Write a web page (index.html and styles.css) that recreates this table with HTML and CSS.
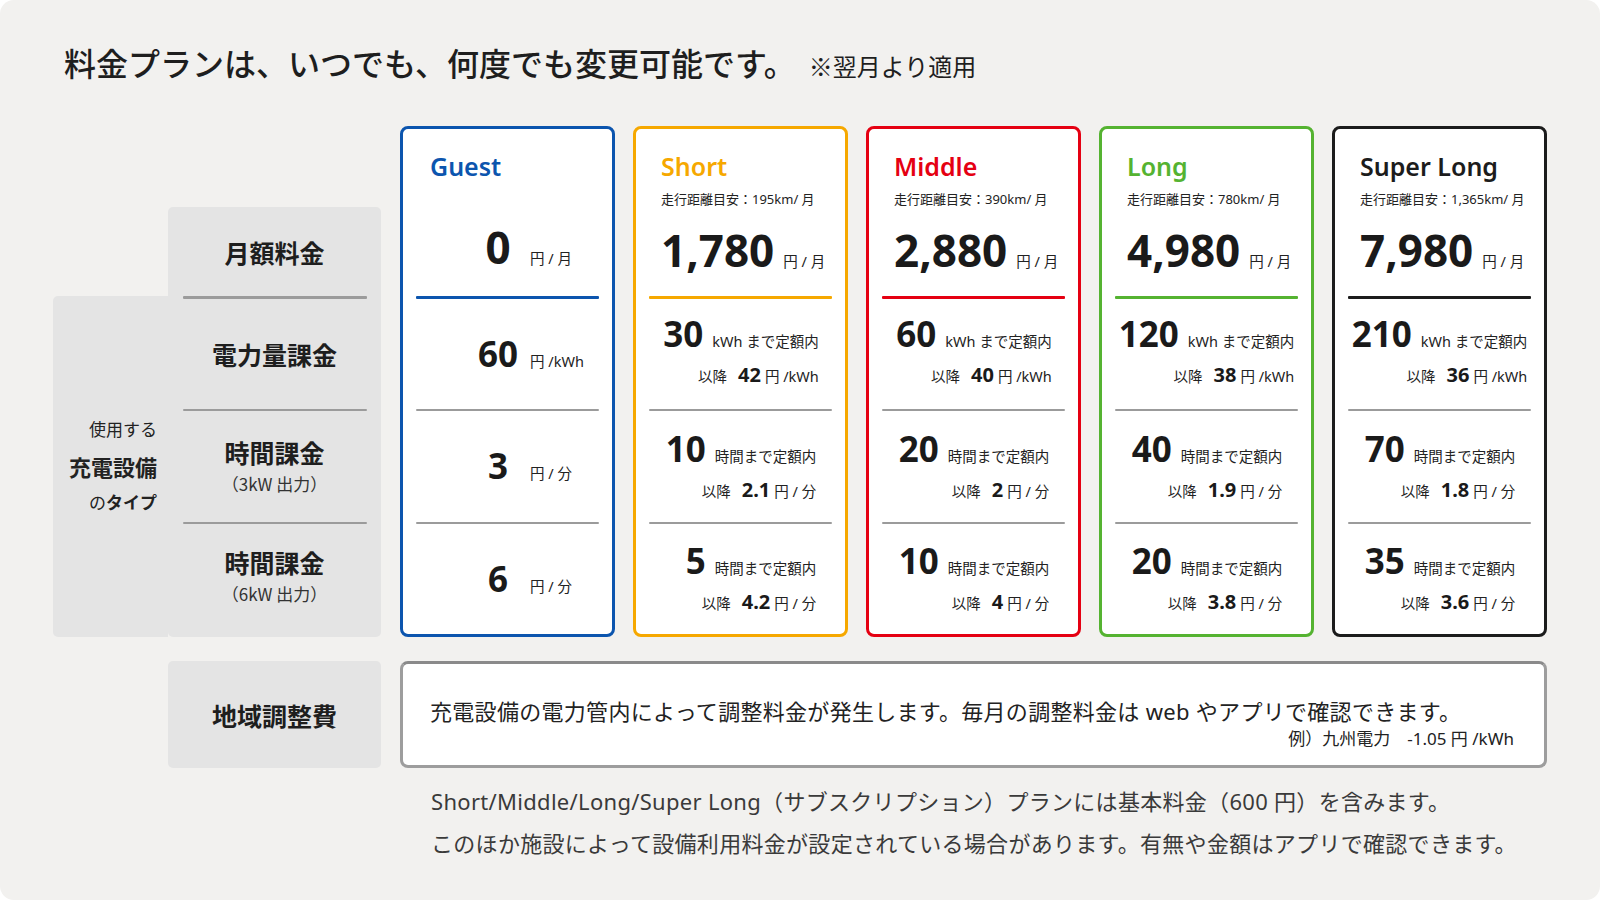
FILE: index.html
```html
<!DOCTYPE html>
<html lang="ja">
<head>
<meta charset="utf-8">
<title>料金プラン</title>
<link rel="stylesheet" href="styles.css">
</head>
<body>
<div class="page">
  <h1 class="headline">料金プランは、いつでも、何度でも変更可能です。<span class="headline-note">※翌月より適用</span></h1>

  <div class="table">
    <div class="labels">
      <div class="type-box">
        <p class="type-l1">使用する</p>
        <p class="type-l2">充電設備</p>
        <p class="type-l3">の<b>タイプ</b></p>
      </div>
      <div class="label-col">
        <div class="label-row label-row--month">月額料金</div>
        <div class="rule rule--label rule--thick"></div>
        <div class="label-row">電力量課金</div>
        <div class="rule rule--label"></div>
        <div class="label-row label-row--kw3"><span>時間課金</span><small>（3kW 出力）</small></div>
        <div class="rule rule--label"></div>
        <div class="label-row"><span>時間課金</span><small>（6kW 出力）</small></div>
      </div>
    </div>

    <div class="cards">
      <!-- Guest -->
      <div class="card card--guest">
        <div class="card-head">
          <div class="plan-name">Guest</div>
          <div class="guest-line guest-line--head"><span class="guest-num guest-num--big">0</span><span class="unit">円 / 月</span></div>
        </div>
        <div class="rule rule--accent"></div>
        <div class="card-row"><div class="guest-line"><span class="guest-num">60</span><span class="unit">円 /kWh</span></div></div>
        <div class="rule"></div>
        <div class="card-row"><div class="guest-line"><span class="guest-num">3</span><span class="unit">円 / 分</span></div></div>
        <div class="rule"></div>
        <div class="card-row"><div class="guest-line"><span class="guest-num">6</span><span class="unit">円 / 分</span></div></div>
      </div>

      <!-- Short -->
      <div class="card card--short">
        <div class="card-head">
          <div class="plan-name">Short</div>
          <div class="plan-range">走行距離目安：195km/ 月</div>
          <div class="plan-price"><span class="price-num">1,780</span><span class="unit">円 / 月</span></div>
        </div>
        <div class="rule rule--accent"></div>
        <div class="card-row card-row--energy"><div class="quota">
          <div class="quota-main"><span class="quota-num">30</span><span class="quota-text">kWh まで定額内</span></div>
          <div class="quota-sub"><span class="sub-label">以降</span><span class="sub-num">42</span><span class="unit">円 /kWh</span></div>
        </div></div>
        <div class="rule"></div>
        <div class="card-row"><div class="quota">
          <div class="quota-main"><span class="quota-num">10</span><span class="quota-text">時間まで定額内</span></div>
          <div class="quota-sub"><span class="sub-label">以降</span><span class="sub-num">2.1</span><span class="unit">円 / 分</span></div>
        </div></div>
        <div class="rule"></div>
        <div class="card-row"><div class="quota">
          <div class="quota-main"><span class="quota-num">5</span><span class="quota-text">時間まで定額内</span></div>
          <div class="quota-sub"><span class="sub-label">以降</span><span class="sub-num">4.2</span><span class="unit">円 / 分</span></div>
        </div></div>
      </div>

      <!-- Middle -->
      <div class="card card--middle">
        <div class="card-head">
          <div class="plan-name">Middle</div>
          <div class="plan-range">走行距離目安：390km/ 月</div>
          <div class="plan-price"><span class="price-num">2,880</span><span class="unit">円 / 月</span></div>
        </div>
        <div class="rule rule--accent"></div>
        <div class="card-row card-row--energy"><div class="quota">
          <div class="quota-main"><span class="quota-num">60</span><span class="quota-text">kWh まで定額内</span></div>
          <div class="quota-sub"><span class="sub-label">以降</span><span class="sub-num">40</span><span class="unit">円 /kWh</span></div>
        </div></div>
        <div class="rule"></div>
        <div class="card-row"><div class="quota">
          <div class="quota-main"><span class="quota-num">20</span><span class="quota-text">時間まで定額内</span></div>
          <div class="quota-sub"><span class="sub-label">以降</span><span class="sub-num">2</span><span class="unit">円 / 分</span></div>
        </div></div>
        <div class="rule"></div>
        <div class="card-row"><div class="quota">
          <div class="quota-main"><span class="quota-num">10</span><span class="quota-text">時間まで定額内</span></div>
          <div class="quota-sub"><span class="sub-label">以降</span><span class="sub-num">4</span><span class="unit">円 / 分</span></div>
        </div></div>
      </div>

      <!-- Long -->
      <div class="card card--long">
        <div class="card-head">
          <div class="plan-name">Long</div>
          <div class="plan-range">走行距離目安：780km/ 月</div>
          <div class="plan-price"><span class="price-num">4,980</span><span class="unit">円 / 月</span></div>
        </div>
        <div class="rule rule--accent"></div>
        <div class="card-row card-row--energy"><div class="quota">
          <div class="quota-main"><span class="quota-num">120</span><span class="quota-text">kWh まで定額内</span></div>
          <div class="quota-sub"><span class="sub-label">以降</span><span class="sub-num">38</span><span class="unit">円 /kWh</span></div>
        </div></div>
        <div class="rule"></div>
        <div class="card-row"><div class="quota">
          <div class="quota-main"><span class="quota-num">40</span><span class="quota-text">時間まで定額内</span></div>
          <div class="quota-sub"><span class="sub-label">以降</span><span class="sub-num">1.9</span><span class="unit">円 / 分</span></div>
        </div></div>
        <div class="rule"></div>
        <div class="card-row"><div class="quota">
          <div class="quota-main"><span class="quota-num">20</span><span class="quota-text">時間まで定額内</span></div>
          <div class="quota-sub"><span class="sub-label">以降</span><span class="sub-num">3.8</span><span class="unit">円 / 分</span></div>
        </div></div>
      </div>

      <!-- Super Long -->
      <div class="card card--super">
        <div class="card-head">
          <div class="plan-name">Super Long</div>
          <div class="plan-range">走行距離目安：1,365km/ 月</div>
          <div class="plan-price"><span class="price-num">7,980</span><span class="unit">円 / 月</span></div>
        </div>
        <div class="rule rule--accent"></div>
        <div class="card-row card-row--energy"><div class="quota">
          <div class="quota-main"><span class="quota-num">210</span><span class="quota-text">kWh まで定額内</span></div>
          <div class="quota-sub"><span class="sub-label">以降</span><span class="sub-num">36</span><span class="unit">円 /kWh</span></div>
        </div></div>
        <div class="rule"></div>
        <div class="card-row"><div class="quota">
          <div class="quota-main"><span class="quota-num">70</span><span class="quota-text">時間まで定額内</span></div>
          <div class="quota-sub"><span class="sub-label">以降</span><span class="sub-num">1.8</span><span class="unit">円 / 分</span></div>
        </div></div>
        <div class="rule"></div>
        <div class="card-row"><div class="quota">
          <div class="quota-main"><span class="quota-num">35</span><span class="quota-text">時間まで定額内</span></div>
          <div class="quota-sub"><span class="sub-label">以降</span><span class="sub-num">3.6</span><span class="unit">円 / 分</span></div>
        </div></div>
      </div>
    </div>
  </div>

  <div class="region">
    <div class="region-label">地域調整費</div>
    <div class="region-box">
      <p class="region-text">充電設備の電力管内によって調整料金が発生します。毎月の調整料金は web やアプリで確認できます。</p>
      <p class="region-example">例）九州電力　-1.05 円 /kWh</p>
    </div>
  </div>

  <div class="notes">
    <p>Short/Middle/Long/Super Long（サブスクリプション）プランには基本料金（600 円）を含みます。</p>
    <p>このほか施設によって設備利用料金が設定されている場合があります。有無や金額はアプリで確認できます。</p>
  </div>
</div>
</body>
</html>
```

FILE: styles.css
```css
* { box-sizing: border-box; margin: 0; padding: 0; }

html, body { background: #ffffff; }

body {
  margin: 0;
  font-family: "Noto Sans", "Noto Sans CJK JP", sans-serif;
  color: #222222;
}

.page {
  width: 1600px;
  height: 900px;
  background: #f2f1ef;
  border-radius: 14px;
  padding: 43px 0 0 53px;
  overflow: hidden;
}

/* headline */
.headline {
  font-family: "Noto Sans CJK JP", sans-serif;
  font-size: 32px;
  font-weight: 500;
  line-height: 38px;
  padding-left: 11px;
  color: #1e1e1e;
  white-space: nowrap;
}
.headline-note {
  font-size: 24px;
  font-weight: 400;
  margin-left: 13px;
}

/* table */
.table {
  display: flex;
  margin-top: 41px;
}

.labels {
  display: grid;
  grid-template-columns: 115px 213px;
  grid-template-rows: 89px 341px;
  align-self: flex-end;
}

.type-box {
  grid-column: 1;
  grid-row: 2;
  background: #e4e4e4;
  border-radius: 5px 0 0 5px;
  display: flex;
  flex-direction: column;
  justify-content: center;
  align-items: flex-end;
  padding: 0 11px 4px 0;
  font-family: "Noto Sans CJK JP", sans-serif;
  color: #222;
}
.type-l1 { font-size: 17px; line-height: 36px; }
.type-l2 { font-size: 22px; line-height: 38px; font-weight: 700; }
.type-l3 { font-size: 17px; line-height: 34px; }
.type-l3 b { font-weight: 700; }

.label-col {
  grid-column: 2;
  grid-row: 1 / span 2;
  background: #e4e4e4;
  border-radius: 5px;
  display: flex;
  flex-direction: column;
  padding-bottom: 3px;
}

.label-row {
  flex: 1 1 0;
  min-height: 0;
  display: flex;
  flex-direction: column;
  align-items: center;
  justify-content: center;
  font-family: "Noto Sans CJK JP", sans-serif;
  font-size: 25px;
  font-weight: 700;
  line-height: 30px;
  color: #1e1e1e;
}
.label-row--month { flex: none; height: 89px; }
.label-row--kw3 span { margin-top: 5px; }
.label-row small {
  font-size: 17px;
  font-weight: 400;
  line-height: 33px;
  color: #333;
}

.rule {
  flex: none;
  height: 2px;
  background: #9b9b9b;
  margin: 0 13px;
  border-radius: 1px;
}
.rule--label { margin: 0 14px 0 15px; }
.rule--thick { height: 3px; }
.rule--accent { height: 3px; background: var(--accent); }

/* cards */
.cards {
  display: flex;
  gap: 18px;
  margin-left: 19px;
}

.card {
  --accent: #222;
  width: 215px;
  height: 511px;
  border: 3px solid var(--accent);
  border-radius: 8px;
  background: #ffffff;
  display: flex;
  flex-direction: column;
}
.card--guest  { --accent: #0c55ae; }
.card--short  { --accent: #f6a800; }
.card--middle { --accent: #e50012; }
.card--long   { --accent: #55b331; }
.card--super  { --accent: #1c1c1c; }

.card-head {
  flex: none;
  height: 167px;
  padding: 22px 0 0 25px;
}
.card--guest .card-head { padding-left: 27px; }

.plan-name {
  font-size: 25px;
  font-weight: 600;
  line-height: 30px;
  color: var(--accent);
  white-space: nowrap;
}
.card--super .plan-name { color: #1c1c1c; }

.plan-range {
  margin-top: 9px;
  font-size: 13px;
  line-height: 18px;
  color: #222;
  white-space: nowrap;
}

.plan-price {
  margin-top: 20px;
  display: flex;
  align-items: baseline;
  white-space: nowrap;
}
.price-num {
  font-size: 44px;
  font-weight: 700;
  line-height: 44px;
  color: #1a1a1a;
}
.plan-price .unit { margin-left: 9px; }

.unit {
  font-size: 14.5px;
  color: #222;
  white-space: nowrap;
}

.card-row {
  flex: 1;
  display: flex;
  justify-content: center;
  align-items: center;
}
.card-row--energy .quota { margin-bottom: 6px; }

/* guest lines */
.guest-line {
  display: flex;
  align-items: baseline;
  align-self: center;
  width: 100%;
}
.guest-line--head { margin-top: 44px; margin-left: -27px; }
.guest-num {
  width: 50px;
  margin-left: 70px;
  text-align: center;
  font-size: 35px;
  font-weight: 700;
  line-height: 40px;
  color: #1a1a1a;
}
.guest-num--big { font-size: 44px; line-height: 44px; }
.guest-line .unit { margin-left: 7px; }

/* quota */
.quota {
  display: flex;
  flex-direction: column;
  align-items: flex-end;
}
.quota-main {
  display: flex;
  align-items: baseline;
  white-space: nowrap;
}
.quota-num {
  min-width: 41px;
  text-align: right;
  font-size: 35px;
  font-weight: 700;
  line-height: 40px;
  color: #1a1a1a;
}
.quota-text {
  margin-left: 9px;
  font-size: 14.5px;
  color: #222;
}
.quota-sub {
  margin-top: 8px;
  display: flex;
  align-items: baseline;
  white-space: nowrap;
  line-height: 26px;
}
.sub-label { font-size: 14.5px; color: #222; }
.sub-num {
  margin-left: 11px;
  font-size: 20px;
  font-weight: 700;
  color: #1a1a1a;
}
.quota-sub .unit { margin-left: 4px; }

/* region */
.region {
  display: flex;
  margin-top: 24px;
  margin-left: 115px;
}
.region-label {
  width: 213px;
  height: 107px;
  background: #e4e4e4;
  border-radius: 5px;
  display: flex;
  align-items: center;
  justify-content: center;
  font-family: "Noto Sans CJK JP", sans-serif;
  font-size: 25px;
  font-weight: 700;
  color: #1e1e1e;
}
.region-box {
  margin-left: 19px;
  width: 1147px;
  height: 107px;
  border: 3px solid #9d9d9d;
  border-top-color: #8a8a8a;
  border-radius: 8px;
  background: #ffffff;
  padding: 31px 30px 0 27px;
}
.region-text {
  font-size: 22px;
  line-height: 32px;
  letter-spacing: 0.3px;
  color: #222;
  white-space: nowrap;
}
.region-example {
  font-size: 17px;
  line-height: 24px;
  text-align: right;
  color: #222;
}

/* notes */
.notes {
  margin-top: 12px;
  margin-left: 378px;
  font-size: 22px;
  line-height: 42px;
  letter-spacing: 0.3px;
  color: #3a3a3a;
  white-space: nowrap;
}
```
